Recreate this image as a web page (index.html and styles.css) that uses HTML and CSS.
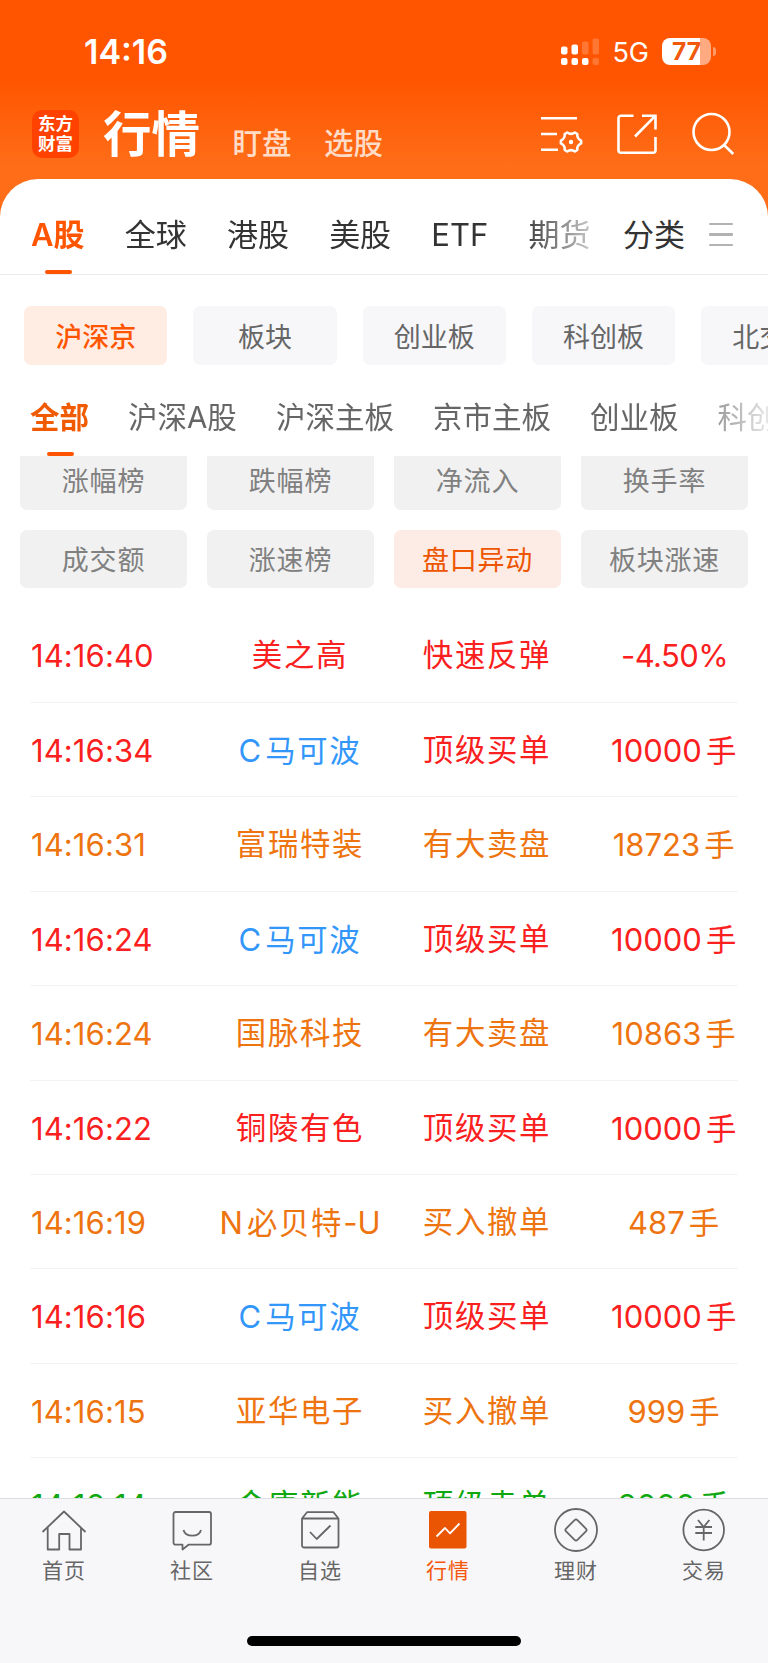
FILE: index.html
```html
<!DOCTYPE html>
<html lang="zh-CN">
<head>
  <meta charset="UTF-8">
  <meta name="viewport" content="width=device-width, initial-scale=1.0">
  <title>行情</title>
  <link rel="stylesheet" href="styles.css">
</head>
<body>
  <div class="app">

    <header class="header">
      <div class="status-bar">
        <span class="status-time">14:16</span>
        <div class="status-right">
          <svg class="signal" width="39" height="28" viewBox="0 0 39 28" fill="#fff">
            <rect x="0" y="8.500" width="6.500" height="8" rx="2"/>
            <rect x="10.500" y="6.500" width="6.500" height="10" rx="2"/>
            <rect x="21" y="3.500" width="6.500" height="13" rx="2" opacity=".2"/>
            <rect x="31.500" y="0.500" width="6.500" height="16" rx="2" opacity=".2"/>
            <rect x="0" y="20" width="6.500" height="7" rx="2"/>
            <rect x="10.500" y="20" width="6.500" height="7" rx="2"/>
            <rect x="21" y="20" width="6.500" height="7" rx="2"/>
            <rect x="31.500" y="20" width="6.500" height="7" rx="2" opacity=".2"/>
          </svg>
          <span class="network">5G</span>
          <div class="battery"><span>77</span></div>
          <span class="battery-tip"></span>
        </div>
      </div>

      <div class="nav">
        <div class="logo">东方<br>财富</div>
        <h1 class="nav-title">行情</h1>
        <a class="nav-link">盯盘</a>
        <a class="nav-link">选股</a>
        <div class="nav-icons">
          <svg width="44" height="44" viewBox="0 0 44 44" fill="none" stroke="#fff" stroke-width="2.600">
            <path d="M2 6.200h36M2 22h16M2 37.800h17"/>
            <path transform="translate(32 30)" stroke-linejoin="round" d="M-3.800-9.500Q0-6.700 3.800-9.500L6.300-8Q5.800-3.400 10.100-1.400V1.400Q5.800 3.400 6.300 8L3.800 9.500Q0 6.700-3.800 9.500L-6.300 8Q-5.800 3.400-10.100 1.400V-1.400Q-5.800-3.400-6.300-8z"/>
            <circle cx="32" cy="30" r="2.200" fill="#fff" stroke="none"/>
          </svg>
          <svg width="44" height="44" viewBox="0 0 44 44" fill="none" stroke="#fff" stroke-width="2.600">
            <path d="M18.500 3.700H6a2.500 2.500 0 0 0-2.500 2.500v32A2.500 2.500 0 0 0 6 40.700h32a2.500 2.500 0 0 0 2.500-2.500V25"/>
            <path d="M27 3.700h13.500V17.500M40.500 3.700L20 24.500"/>
          </svg>
          <svg width="44" height="44" viewBox="0 0 44 44" fill="none" stroke="#fff" stroke-width="2.600">
            <circle cx="20.500" cy="20" r="18"/>
            <path d="M33 33l9.300 9"/>
          </svg>
        </div>
      </div>
    </header>

    <main class="panel">
      <nav class="market-tabs">
        <div class="market-scroll">
          <a class="active">A股</a>
          <a>全球</a>
          <a>港股</a>
          <a>美股</a>
          <a>ETF</a>
          <a>期货</a>
        </div>
        <a class="category">分类</a>
        <div class="menu"><i></i><i></i><i></i></div>
      </nav>

      <div class="chips">
        <a class="active">沪深京</a>
        <a>板块</a>
        <a>创业板</a>
        <a>科创板</a>
        <a>北交所</a>
      </div>

      <nav class="sub-tabs">
        <a class="active">全部</a>
        <a>沪深A股</a>
        <a>沪深主板</a>
        <a>京市主板</a>
        <a>创业板</a>
        <a>科创板</a>
      </nav>

      <div class="scroll-area">
        <div class="ranks">
          <a>涨幅榜</a>
          <a>跌幅榜</a>
          <a>净流入</a>
          <a>换手率</a>
          <a>成交额</a>
          <a>涨速榜</a>
          <a class="active">盘口异动</a>
          <a>板块涨速</a>
        </div>

        <ul class="list">
          <li class="row red"><span class="time">14:16:40</span><span>美之高</span><span>快速反弹</span><span class="value percent"><b>-4.50%</b></span></li>
          <li class="row red"><span class="time">14:16:34</span><span class="blue"><b>C</b>马可波</span><span>顶级买单</span><span class="value"><b>10000</b>手</span></li>
          <li class="row orange"><span class="time">14:16:31</span><span>富瑞特装</span><span>有大卖盘</span><span class="value"><b>18723</b>手</span></li>
          <li class="row red"><span class="time">14:16:24</span><span class="blue"><b>C</b>马可波</span><span>顶级买单</span><span class="value"><b>10000</b>手</span></li>
          <li class="row orange"><span class="time">14:16:24</span><span>国脉科技</span><span>有大卖盘</span><span class="value"><b>10863</b>手</span></li>
          <li class="row red"><span class="time">14:16:22</span><span>铜陵有色</span><span>顶级买单</span><span class="value"><b>10000</b>手</span></li>
          <li class="row orange"><span class="time">14:16:19</span><span><b>N</b>必贝特<b class="suffix">-U</b></span><span>买入撤单</span><span class="value"><b>487</b>手</span></li>
          <li class="row red"><span class="time">14:16:16</span><span class="blue"><b>C</b>马可波</span><span>顶级买单</span><span class="value"><b>10000</b>手</span></li>
          <li class="row orange"><span class="time">14:16:15</span><span>亚华电子</span><span>买入撤单</span><span class="value"><b>999</b>手</span></li>
          <li class="row green"><span class="time">14:16:14</span><span>金康新能</span><span>顶级卖单</span><span class="value"><b>8000</b>手</span></li>
        </ul>
      </div>
    </main>

    <footer class="tab-bar">
      <div class="tabs">
        <a>
          <svg width="48" height="48" viewBox="0 0 48 48"><path d="M2.500 26L24 5.500 45.500 26M7.700 21.500v22h11.500V28h10.300v15.500H41v-22"/></svg>
          首页
        </a>
        <a>
          <svg width="48" height="48" viewBox="0 0 48 48"><path d="M7.500 6H41a2 2 0 0 1 2 2v28.700a2 2 0 0 1-2 2H20.500l-6 4.800v-4.800h-7a2 2 0 0 1-2-2V8a2 2 0 0 1 2-2z"/><path d="M15.500 24c2 7.500 15.500 7.500 17.500 0"/></svg>
          社区
        </a>
        <a>
          <svg width="48" height="48" viewBox="0 0 48 48"><path d="M6 12.500h36.500M6 12.500l5-6.300h26.500l5 6.300v27a2 2 0 0 1-2 2H8a2 2 0 0 1-2-2zM14 26l6.700 7 13.800-13.500"/></svg>
          自选
        </a>
        <a class="active">
          <svg width="48" height="48" viewBox="0 0 48 48"><rect class="fill" x="5" y="5" width="37.500" height="37.500" rx="2"/><path class="trend" d="M12.500 30.500l8.500-8.500 5 5.300 9.500-9.800"/></svg>
          行情
        </a>
        <a>
          <svg width="48" height="48" viewBox="0 0 48 48"><circle cx="24" cy="24" r="21"/><rect x="16" y="16" width="16" height="16" rx="2" transform="rotate(45 24 24)"/></svg>
          理财
        </a>
        <a>
          <svg width="48" height="48" viewBox="0 0 48 48"><circle cx="23.700" cy="24" r="20.300"/><path d="M18 14l5.700 7 5.700-7M23.700 21v13.500M15.300 21H32M15.300 27H32"/></svg>
          交易
        </a>
      </div>
      <div class="home-indicator"></div>
    </footer>

  </div>
</body>
</html>
```

FILE: styles.css
```css
* {
  box-sizing: border-box;
}

body {
  margin: 0;
  font-family: Inter, "Noto Sans CJK SC", sans-serif;
  background-color: #fff;
}

.app {
  display: flex;
  flex-direction: column;
  width: 768px;
  height: 1663px;
  overflow: hidden;
  white-space: nowrap;
  background: linear-gradient(#ff5500 0, #ff5500 80px, #ff6d18 165px);
}

/* header */
.header {
  height: 179px;
  color: #fff;
}

.status-bar {
  display: flex;
  justify-content: space-between;
  align-items: center;
  height: 103px;
  padding: 0 52px 0 84px;
}

.status-time {
  font-size: 34px;
  font-weight: 600;
}

.status-right {
  display: flex;
  align-items: center;
}

.network {
  margin: 2px 13px 0 12px;
  font-size: 27px;
  line-height: 28px;
}

.battery {
  width: 49px;
  height: 27px;
  border-radius: 8px;
  background: linear-gradient(90deg, #fff 38px, #ffaa80 38px);
  color: #f05a0a;
  font-size: 24.500px;
  font-weight: 700;
  line-height: 27px;
  text-align: center;
}

.battery-tip {
  width: 3px;
  height: 9px;
  margin-left: 2px;
  border-radius: 0 4px 4px 0;
  background-color: #ff9966;
}

.nav {
  display: flex;
  align-items: flex-end;
  height: 55px;
  padding: 0 33px 0 32px;
}

.logo {
  width: 47px;
  height: 48px;
  padding-top: 4px;
  border-radius: 10px;
  background-color: #ff4200;
  font-size: 17.500px;
  font-weight: 700;
  line-height: 20px;
  text-align: center;
}

.nav-title {
  margin: 0 0 0 24px;
  font-size: 48.500px;
  font-weight: 700;
  line-height: 47px;
}

.nav-link {
  margin-left: 32.500px;
  color: #ffdcc8;
  font-size: 29.500px;
  font-weight: 500;
  line-height: 30px;
}

.nav-icons {
  display: flex;
  gap: 32px;
  margin-left: auto;
  margin-bottom: 2px;
}

.panel {
  display: flex;
  flex-direction: column;
  flex: 1;
  min-height: 0;
  border-radius: 38px 38px 0 0;
  background-color: #fff;
}

/* market tabs */
.market-tabs {
  display: flex;
  height: 96px;
  padding-left: 31px;
  border-bottom: 1px solid #ebebeb;
  color: #333;
  font-size: 31px;
  line-height: 112px;
}

.market-scroll {
  display: flex;
  gap: 40.200px;
  width: 566px;
  overflow: hidden;
  -webkit-mask-image: linear-gradient(90deg, #000 490px, transparent 585px);
  mask-image: linear-gradient(90deg, #000 490px, transparent 585px);
}

.market-scroll .active,
.sub-tabs .active {
  position: relative;
  color: #ff5500;
  font-weight: 600;
}

.market-scroll .active::after,
.sub-tabs .active::after {
  content: "";
  position: absolute;
  left: 50%;
  bottom: 0;
  width: 27px;
  height: 4px;
  margin-left: -13px;
  border-radius: 2px;
  background-color: #ff5500;
}

.category {
  margin-left: 26px;
}

.menu {
  display: flex;
  flex-direction: column;
  gap: 8px;
  margin: 43.500px 0 0 24px;
}

.menu i {
  width: 24px;
  height: 2.500px;
  border-radius: 1px;
  background-color: #b2b2b2;
}

/* board chips */
.chips {
  display: flex;
  gap: 26px;
  padding: 31px 0 0 24px;
  overflow: hidden;
}

.chips a {
  flex: 0 0 143.300px;
  height: 59px;
  border-radius: 7px;
  background-color: #f7f7fa;
  color: #666;
  font-size: 27px;
  line-height: 63px;
  text-align: center;
}

.chips .active {
  background-color: #ffede4;
  color: #ff5500;
  font-weight: 500;
}

.sub-tabs {
  display: flex;
  gap: 39px;
  height: 91px;
  padding-left: 30px;
  overflow: hidden;
  color: #666;
  font-size: 29.500px;
  line-height: 105px;
  -webkit-mask-image: linear-gradient(90deg, #000 680px, transparent 785px);
  mask-image: linear-gradient(90deg, #000 680px, transparent 785px);
}

.sub-tabs .active {
  color: #f05a00;
}

.scroll-area {
  flex: 1;
  min-height: 0;
  overflow: hidden;
}

/* rank buttons, first row is scrolled under the tabs */
.ranks {
  display: grid;
  grid-template-columns: repeat(4, 167px);
  gap: 20px;
  margin-top: -5px;
  padding-left: 20px;
}

.ranks a {
  height: 58.700px;
  border-radius: 7px;
  background-color: #f1f1f1;
  color: #808080;
  font-size: 27px;
  letter-spacing: .8px;
  line-height: 61px;
  text-align: center;
}

.ranks .active {
  background-color: #fdece5;
  color: #ee5500;
}

/* list */
.list {
  margin: 20px 30px 0;
  padding: 0;
  list-style: none;
}

.row {
  display: grid;
  grid-template-columns: 180px 180px 194px 154px;
  height: 94.450px;
  border-bottom: 1px solid #f3f3f3;
  font-size: 30.400px;
  letter-spacing: 1.700px;
  line-height: 95px;
  text-align: center;
}

.row b {
  margin-right: 4px;
  font-size: 31px;
  font-weight: 400;
  letter-spacing: 0;
}

.row .suffix {
  margin-right: 0;
}

.row .time {
  padding-left: 1px;
  font-size: 31px;
  letter-spacing: .1px;
  text-align: left;
}

.row .value {
  padding-left: 27px;
}

.row .percent b {
  margin-right: 0;
  letter-spacing: -.6px;
}

.red {
  color: #fa2020;
}

.orange {
  color: #ee7410;
}

.green {
  color: #10a810;
}

.blue {
  color: #3296fa;
}

/* bottom bar */
.tab-bar {
  height: 165px;
  border-top: 1px solid #dcdde2;
  background-color: #f7f7fa;
}

.tabs {
  display: grid;
  grid-template-columns: repeat(6, 1fr);
  height: 137px;
  padding-top: 7px;
}

.tabs a {
  display: flex;
  flex-direction: column;
  align-items: center;
  color: #666;
  font-size: 21px;
  letter-spacing: 1px;
  line-height: 34px;
}

.tabs svg {
  fill: none;
  stroke: #666;
  stroke-width: 1.800;
  stroke-linejoin: round;
}

.tabs .active {
  color: #f5570a;
}

.tabs .fill {
  fill: #ea5504;
  stroke: none;
}

.tabs .trend {
  stroke: #fff;
}

.home-indicator {
  width: 274px;
  height: 10px;
  margin: 0 auto;
  border-radius: 5px;
  background-color: #000;
}
```
